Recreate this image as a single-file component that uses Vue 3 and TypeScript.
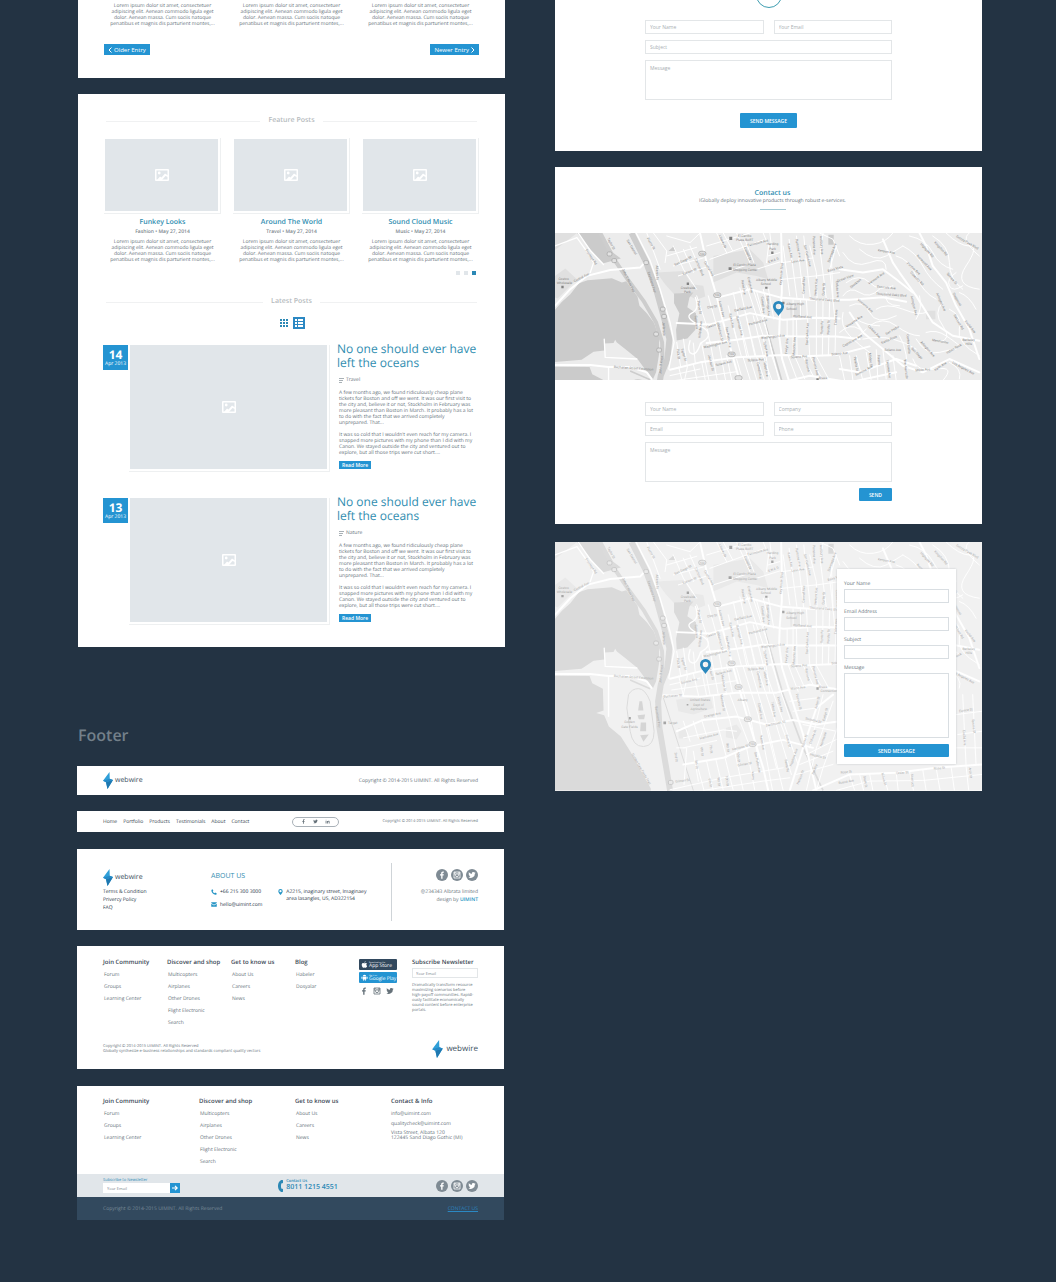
<script setup lang="ts">
import { h, type FunctionalComponent } from 'vue'

interface Post {
  title: string
  meta: string
}
interface Entry {
  day: string
  month: string
  tag: string
}
interface LinkGroup {
  title: string
  links: string[]
}
type Label = [number, number, number, string]

const excerpt = [
  'Lorem ipsum dolor sit amet, consectetuer',
  'adipiscing elit. Aenean commodo ligula eget',
  'dolor. Aenean massa. Cum sociis natoque',
  'penatibus et magnis dis parturient montes,...',
].join('\n')

const features: Post[] = [
  { title: 'Funkey Looks', meta: 'Fashion • May 27, 2014' },
  { title: 'Around The World', meta: 'Travel • May 27, 2014' },
  { title: 'Sound Cloud Music', meta: 'Music • May 27, 2014' },
]

const entries: Entry[] = [
  { day: '14', month: 'Apr 2013', tag: 'Travel' },
  { day: '13', month: 'Apr 2013', tag: 'Nature' },
]

const story = [
  'A few months ago, we found ridiculously cheap plane',
  'tickets for Boston and off we went. It was our first visit to',
  'the city and, believe it or not, Stockholm in February was',
  'more pleasant than Boston in March. It probably has a lot',
  'to do with the fact that we arrived completely',
  'unprepared. That...',
  '',
  "It was so cold that I wouldn't even reach for my camera. I",
  'snapped more pictures with my phone than I did with my',
  'Canon. We stayed outside the city and ventured out to',
  'explore, but all those trips were cut short....',
].join('\n')

const nav = ['Home', 'Portfolio', 'Products', 'Testimonials', 'About', 'Contact']
const legal = ['Terms & Condition', 'Privercy Policy', 'FAQ']

const groups: LinkGroup[] = [
  { title: 'Join Community', links: ['Forum', 'Groups', 'Learning Center'] },
  { title: 'Discover and shop', links: ['Multicopters', 'Airplanes', 'Other Drones', 'Flight Electronic', 'Search'] },
  { title: 'Get to know us', links: ['About Us', 'Careers', 'News'] },
]
const blog: LinkGroup = { title: 'Blog', links: ['Habeler', 'Dosyalar'] }

const newsletter = [
  'Dramatically transform resource',
  'maximizing scenarios before',
  'high-payoff communities. Rapidi-',
  'ously facilitate economically',
  'sound content before enterprise',
  'portals.',
].join('\n')

const cardFields = [
  { id: 'card-name', label: 'Your Name' },
  { id: 'card-email', label: 'Email Address' },
  { id: 'card-subject', label: 'Subject' },
]

// Main avenues, drawn wide
const avenues = [
  'M450 21 L470 110 L497 200 L520 290 L545 380 L590 540 L640 700 L655 768',
  'M694 21 L696 110 L696 200 L690 270 L688 330 L697 400 L722 480 L760 600 L800 768',
  'M14 418 L120 418 L175 424 L240 424 L290 440 L305 460',
  'M14 240 L60 190 L110 150 L180 132 L270 125 L288 105',
  'M360 432 L450 410 L560 395 L700 388 L760 392 L860 388 L960 362',
  'M340 482 L450 486 L560 474 L680 474 L780 450 L900 470 L1040 440',
  'M380 292 L480 296 L600 262 L700 282 L800 276 L870 278',
  'M470 352 L560 342 L640 330 L740 332 L860 332 L930 340',
  'M500 216 L600 190 L696 216 L780 222 L900 222 L1000 214 L1070 228',
  'M380 590 L460 556 L560 546 L650 570 L730 556 L800 570 L870 560',
  'M400 690 L520 670 L600 636 L700 616 L790 640',
  'M850 480 L800 520 L760 640 L720 768',
  'M1000 40 L1030 110 L1050 140 L1100 210 L1150 290 L1210 330 L1290 345',
  'M1110 21 L1130 60 L1150 120 L1190 170 L1220 240 L1260 310 L1290 400',
  'M870 130 L940 140 L1000 130 L1040 160 L1090 200',
  'M900 260 L940 320 L1000 370 L1060 420 L1120 440 L1200 400 L1290 440',
  'M870 430 L930 440 L1040 400 L1100 420',
  'M790 768 L900 720 L1040 715 L1160 700 L1298 690',
]

// Side streets, drawn thin
const streets = [
  'M290 21 L330 130', 'M310 21 L350 75 L345 110', 'M350 30 L420 50 L450 21', 'M370 60 L400 130 L440 190',
  'M400 70 L430 140', 'M420 60 L446 120', 'M350 90 L440 64', 'M370 120 L460 96', 'M385 150 L468 124',
  'M470 60 L600 21', 'M480 100 L640 42', 'M490 150 L590 118', 'M500 21 L530 80', 'M520 21 L548 74',
  'M560 21 L600 110', 'M585 40 L612 110', 'M640 21 L656 60 L650 110', 'M620 130 L690 108', 'M655 90 L690 80',
  'M660 21 L666 70', 'M700 60 L720 210', 'M718 40 L742 220', 'M740 30 L762 220', 'M762 30 L782 220',
  'M780 60 L800 140 L802 222', 'M700 110 L790 96', 'M700 160 L800 150', 'M820 21 L812 80 L830 220',
  'M845 90 L850 220', 'M860 60 L840 130 L858 300 L856 390', 'M800 150 L870 140', 'M810 21 L850 40 L870 90',
  'M730 222 L730 390', 'M752 222 L752 280', 'M770 222 L780 390', 'M800 222 L800 390', 'M820 222 L818 390',
  'M840 222 L836 390', 'M712 282 L712 388', 'M740 282 L742 388', 'M550 200 L590 390', 'M570 186 L615 390',
  'M590 180 L640 330 L660 474', 'M610 190 L655 330 L690 474', 'M640 190 L660 270', 'M620 196 L640 270',
  'M656 190 L672 280', 'M535 240 L560 342', 'M550 300 L575 395', 'M570 286 L596 392', 'M590 276 L618 392',
  'M610 270 L640 390', 'M640 270 L668 388', 'M475 210 L500 300 L520 350', 'M440 210 L470 300 L480 352',
  'M455 352 L480 480', 'M480 346 L505 480', 'M505 346 L530 480', 'M530 390 L548 476', 'M430 352 L436 414',
  'M400 340 L412 424 L400 480', 'M380 350 L392 424', 'M360 450 L450 430', 'M365 466 L560 438', 'M386 424 L400 482',
  'M430 416 L446 484', 'M455 408 L470 484', 'M560 400 L600 540 L630 700', 'M580 396 L625 540 L668 768',
  'M600 394 L650 560 L700 768', 'M620 392 L676 560 L725 720', 'M640 390 L700 560 L745 690', 'M665 388 L722 556',
  'M715 390 L745 470', 'M735 392 L765 460', 'M760 392 L790 450', 'M780 392 L812 450', 'M800 392 L838 462',
  'M540 480 L570 560 L600 636', 'M515 480 L540 560 L560 650', 'M490 484 L500 560 L530 670', 'M400 560 L420 620',
  'M430 560 L445 610', 'M455 556 L470 604', 'M400 610 L520 586 L560 590', 'M400 640 L500 618', 'M440 686 L462 768',
  'M470 680 L490 768', 'M498 676 L520 768', 'M525 668 L550 768', 'M555 655 L580 768', 'M590 640 L615 768',
  'M430 650 L445 740', 'M380 640 L410 640 L402 750', 'M360 766 L520 730 L700 700', 'M460 768 L640 740 L720 730',
  'M650 580 L680 700', 'M690 560 L720 640', 'M720 500 L800 490', 'M730 530 L800 520', 'M760 570 L860 590',
  'M770 660 L870 610', 'M750 690 L850 650', 'M740 720 L850 690', 'M820 480 L780 640', 'M850 500 L800 640 L770 768',
  'M870 560 L820 700 L800 768', 'M960 718 L970 768', 'M1000 716 L1015 768', 'M1040 715 L1046 768', 'M900 722 L915 768',
  'M930 720 L942 768', 'M1080 710 L1092 768', 'M1120 706 L1130 768', 'M1160 700 L1172 768', 'M1205 696 L1215 768',
  'M1250 694 L1258 768', 'M860 768 L960 740 L1120 738 L1298 720', 'M1220 540 L1298 530', 'M1225 600 L1298 590',
  'M1240 480 L1250 690', 'M1270 480 L1280 690', 'M1220 640 L1298 640',
  'M900 30 Q930 60 970 55 T1030 21', 'M930 70 Q975 110 1010 90 T1060 60', 'M880 80 Q910 130 960 110 T1010 130',
  'M890 170 Q930 140 960 170 T1030 180', 'M880 210 Q900 180 930 200 T990 190', 'M900 240 Q940 220 960 260 T1040 270',
  'M880 260 Q870 300 900 330 T960 380', 'M870 320 Q900 290 930 310', 'M960 300 Q1000 270 1040 300 T1110 330',
  'M940 340 Q990 330 1030 340 T1100 370', 'M980 250 Q1010 230 1060 250 T1130 260', 'M1060 60 Q1100 80 1120 120 T1180 190',
  'M1040 90 Q1080 100 1100 150 T1160 220', 'M1080 30 Q1130 40 1150 80 T1210 130', 'M1150 30 Q1200 60 1200 110 T1240 190',
  'M1190 21 Q1230 60 1260 60 T1250 120 T1290 190', 'M1220 140 Q1190 160 1200 180 T1240 180', 'M1180 230 Q1150 260 1180 300 T1170 350',
  'M1200 250 Q1240 270 1230 310 T1290 390', 'M1130 320 Q1160 310 1190 330 T1230 360', 'M1100 340 Q1130 390 1170 380 T1220 370',
  'M1050 330 Q1080 380 1070 460', 'M1090 400 Q1100 440 1160 430 T1180 465', 'M1200 410 Q1240 430 1230 460',
  'M1000 370 L1010 460', 'M980 372 L985 465', 'M950 380 L965 465', 'M920 390 L940 465', 'M900 390 L910 465',
  'M870 392 L885 465', 'M1030 390 L1040 465', 'M1260 21 Q1230 40 1290 90', 'M1230 200 Q1260 210 1280 250',
  'M920 280 Q950 300 990 300', 'M900 350 Q930 330 950 310', 'M1010 200 Q1000 240 1050 240', 'M1110 210 Q1120 250 1100 280',
]

const labels: Label[] = [
  [120, 95, 55, 'Frontage Rd'], [180, 55, 62, 'Taylor St'], [242, 65, 60, 'San Gabriel'], [300, 55, 60, 'Pierce St'],
  [318, 140, 88, 'Adams St'], [95, 158, -28, 'Central Ave'], [400, 108, -26, 'San Diego St'], [420, 140, -20, 'Lassen St'],
  [445, 125, 66, 'Carlson Blvd'], [474, 130, 60, 'Central Ave'], [590, 84, 66, 'Cornell St'], [515, 48, 66, 'Liberty St'],
  [625, 54, -14, 'Fairmount Ave'], [672, 106, -22, 'E N A G'], [698, 145, -86, 'Key Route Blvd'], [718, 75, 78, 'Kains Ave'],
  [742, 68, 80, 'Ramona Ave'], [745, 108, -8, 'Lynn Ave'], [770, 90, 76, 'San Carlos Ave'], [790, 58, 88, 'Pomona Ave'],
  [812, 58, 86, 'Ashbury Ave'], [850, 82, -70, 'Stannage Ave'], [858, 132, -16, 'Balra Vista'], [765, 178, -88, 'Carmel Ave'],
  [802, 185, -86, 'Ventura Ave'], [825, 190, -86, 'Curtis St'], [860, 190, 86, 'Colusa Ave'], [888, 160, -20, 'Ocean View'],
  [920, 175, -40, 'Stockton'], [636, 238, 84, 'Cornell Ave'], [652, 240, 86, 'Stannage Ave'], [578, 185, 80, 'Kains Ave'],
  [598, 178, 78, 'Evelyn Ave'], [580, 252, -12, 'Garfield Ave'], [487, 246, -8, 'Clay St'], [512, 250, 76, 'Adams Ave'],
  [445, 245, 80, 'Pierce St'], [436, 290, 84, 'Gateview'], [454, 312, -84, 'Hillside Ave'], [490, 302, -18, 'Castro St'],
  [508, 322, 76, 'Madison St'], [532, 335, 80, 'San Pablo Ave'], [542, 285, 78, 'Kains Ave'], [566, 300, 76, 'Stannage Ave'],
  [625, 292, -14, 'Portland Ave'], [758, 276, 4, 'Portland Ave'], [824, 225, 4, 'Thousand Oaks Blvd'], [670, 336, -6, 'Washington Ave'],
  [497, 360, -14, 'Washington Ave'], [645, 370, 78, 'Talbot Ave'], [714, 362, -86, 'Evelyn Ave'], [736, 362, -86, 'Masonic Ave'],
  [776, 325, -88, 'San Carlos Ave'], [820, 305, -88, 'Santa Fe'], [840, 305, -88, 'Peralta St'], [862, 275, -86, 'Tulare Ave'],
  [618, 406, -4, 'Solano Ave'], [748, 396, -4, 'Solano Ave'], [870, 387, -6, 'Solano Ave'], [1030, 376, 0, 'Solano Ave'],
  [418, 442, -14, 'Solano Ave'], [522, 416, -14, 'Solano Ave'], [382, 385, 84, 'Polk St'], [398, 388, 72, 'Taylor St'],
  [480, 412, 76, 'Jackson St'], [625, 435, 80, 'Cornell Ave'], [645, 430, 80, 'Talbot Ave'], [770, 420, 76, 'Ramona'],
  [794, 422, 76, 'Pomona Ave'], [518, 445, 80, 'Madison St'], [916, 415, 80, 'Peralta St'], [960, 403, 84, 'Modoc St'],
  [985, 403, 84, 'Fresno'], [1066, 430, 84, 'The Alameda'], [1074, 355, 84, 'Contra Costa'], [1014, 430, 82, 'Tacoma Ave'],
  [1120, 436, -4, 'Marin Ave'], [1240, 430, 28, 'Los Angeles Ave'], [984, 455, -4, 'Marina St'], [944, 438, -26, 'Sonoma Ave'],
  [915, 290, -34, 'Vincente Ave'], [910, 348, -30, 'Capistrano Ave'], [972, 320, 46, 'Colusa Ave'], [1030, 316, -30, 'San Pedro'],
  [1020, 345, -24, 'Santa Rosa'], [1010, 188, 6, 'San Luis Ave'], [1025, 210, 4, 'Thousand Oaks Blvd'], [982, 160, -36, 'Vermont Ave'],
  [945, 242, 40, 'Vincente Ave'], [1010, 80, 10, 'Kenyon Ave'], [1130, 75, 48, 'Highgate Rd'], [1122, 112, 46, 'Norwood Ave'],
  [1090, 130, 42, 'Purdue Ave'], [1100, 160, 46, 'Coventry Rd'], [1172, 70, 48, 'Kingston Rd'], [1172, 230, 66, 'Arlington Ave'],
  [1090, 240, 76, 'Arlington Ave'], [1205, 160, 50, 'Spruce St'], [1252, 52, 30, 'Grizzly Peak Blvd'], [1220, 222, 60, 'Cragmont'],
  [1225, 290, 60, 'San Luis Rd'], [1260, 305, 50, 'Euclid Ave'], [1132, 372, 48, 'Arlington Ave'], [1172, 350, 10, 'Mendocino'],
  [1215, 372, -30, 'Indian Rock'], [1100, 385, 46, 'San Diego'], [1175, 425, -34, 'Keith Ave'],
  [232, 165, 64, 'John T. Knox Fwy'], [302, 170, 72, 'Eastshore Fwy'], [336, 418, -84, 'John T Knox'], [338, 310, 86, 'Jefferson'],
  [250, 431, 4, 'Buchanan Street Extension'], [368, 487, -4, 'Buchanan St'], [745, 463, -8, 'Marin Ave'], [790, 560, 14, 'Sonoma St'],
  [678, 570, -12, 'Dartmouth St'], [488, 544, -12, 'Orange Ave'], [478, 608, -14, 'Harrison Ave'], [515, 505, 80, 'Madison St'],
  [585, 692, -10, 'Gilman St'], [572, 642, -14, 'Harrison St'], [620, 684, 78, 'San Pablo Ave'], [320, 548, 80, 'Eastshore Fwy'],
  [375, 668, 84, '2nd St'], [436, 690, 84, '5th St'], [453, 652, 84, '6th St'], [480, 644, 84, '7th St'],
  [530, 640, 84, '8th St'], [503, 742, 84, '9th St'], [478, 746, 80, '6th St'], [562, 668, 84, '10th St'],
  [606, 724, 84, 'Kains'], [528, 740, 84, '10th St'], [398, 742, -8, 'Gilman St'], [326, 762, -8, 'Gilman St'],
  [270, 705, 60, 'Golden Gate Fields Trail'], [628, 530, 80, 'Cornell Ave'], [688, 510, 76, 'Evelyn Ave'], [668, 525, 80, 'Talbot Ave'],
  [634, 625, 80, 'Kains Ave'], [712, 620, 76, 'Curtis St'], [744, 502, 76, 'Pomona St'], [735, 670, -70, 'Hopkins Ave'],
  [708, 694, 80, 'Santa Fe'], [768, 620, -72, 'Albina St'], [806, 505, -76, 'Acton St'], [792, 608, -70, 'Ordway St'],
  [798, 706, -70, 'Peralta'], [755, 730, -68, 'Neilson St'], [804, 668, 14, 'Hopkins St'], [680, 762, -4, 'Page St'],
  [830, 540, -76, 'Evelyn St'], [824, 615, -72, 'Northside'], [890, 716, -6, 'Rose St'], [890, 745, -10, 'Buena Ave'],
  [944, 742, 80, 'Grant St'], [1000, 735, 74, 'Milvia St'], [1024, 755, -6, 'Vine St'], [1058, 718, -4, 'Cedar St'],
  [1085, 738, 86, 'Shattuck'], [1170, 704, -4, 'Rose St'], [1260, 715, 84, 'Arch St'], [1242, 610, 86, 'Euclid Ave'],
  [1270, 575, 84, 'Spruce St'], [1250, 530, -8, 'Eunice St'],
]

const places: Label[] = [
  [668, 58, 0, 'Harding'], [668, 72, 0, 'Park'], [584, 33, 0, 'El Cerrito'], [584, 46, 0, 'Plaza BART'],
  [584, 121, 0, 'El Cerrito Plaza'], [586, 134, 0, 'Shopping Center'], [650, 164, 0, 'Albany Middle'], [648, 177, 0, 'School'],
  [414, 188, 0, 'Creekside'], [412, 201, 0, 'Park'], [736, 239, 0, 'Albany High'], [725, 252, 0, 'School'],
  [40, 162, 0, 'Costco'], [42, 175, 0, 'Wholesale'], [1258, 346, 0, 'Berkeley'], [1258, 359, 0, 'Hills'],
  [450, 500, 0, 'United States'], [446, 513, 0, 'Dept of'], [446, 526, 0, 'Agriculture'], [578, 500, 0, 'Albany'],
  [238, 566, 0, 'Golden'], [238, 579, 0, 'Gate Fields'], [368, 569, 0, 'Target'], [820, 460, 0, 'Brass'],
  [838, 473, 0, 'Connection'],
]

const shields: Array<[number, number]> = [[457, 83], [502, 208], [545, 386], [566, 457], [594, 554], [608, 629]]
const interchanges: Array<[number, number]> = [[192, 104], [288, 110], [338, 250], [318, 325], [327, 373], [362, 744], [178, 84], [342, 272]]

const parks = [
  'M14 21H80L14 72zM320 140L400 135 425 175 460 180 466 212 440 222 400 200 372 205 345 175z',
  'M490 90L600 70 640 110 655 160 620 150 560 140 490 170zM378 495L480 480 490 520 430 540 385 530z',
  'M720 232H755V275H722zM14 150L45 128 80 160 22 218 14 215zM528 580L560 570 575 590 560 615 528 608z',
  'M384 580H412V612H386zM1130 255H1158V280H1130z',
]
const water = [
  'M80 21H150L188 80 212 98 160 112 122 72z',
  'M14 252L35 228 60 205 86 172 112 163 185 157 215 170 228 166 262 212 268 240 290 262 312 292 327 335 327 385 318 440 308 462 262 400 225 370 200 350 195 342 190 352 164 353 162 374 130 378 94 402 14 409z',
  'M14 423L118 424 126 446 158 462 160 528 138 535 162 542 176 576 212 606 240 650 270 705 302 762V768H14z',
  'M372 203L430 200 418 216 412 244 438 262 436 312 412 338 380 344 378 312 388 262 372 232z',
  'M355 75L372 60 375 75zM836 26H852V56H836z',
]
const highways: Array<[number, string]> = [
  [18, 'M244 21L286 104 318 190 340 270 358 340 352 400 332 450 324 500 328 580 345 680 360 768'],
  [12, 'M150 21L192 100 232 160 280 225 318 290 336 350 338 430'],
  [5, 'M240 436L300 462M640 270L660 340 700 480 760 640 820 768'],
  [3, 'M340 490L430 768'],
  [3, 'M235 480Q245 462 265 462T300 500L312 590Q312 635 280 636T240 590L230 520z'],
]
const ramps = [
  'M84 21L122 76 160 116M258 21L300 104 330 190 360 290 372 350 356 430M162 340L165 395 260 400M175 424V545M14 60L80 35 112 80 130 110 120 140',
  'M436 215Q450 250 425 262T450 300 452 352Q440 390 425 384T420 345',
]

// Street map; rows below `depth` map units are left out
const StreetMap: FunctionalComponent<{ depth: number }> = ({ depth }) => {
  const lines = (list: string[], width: number) => list.map((d) => h('path', { d, 'stroke-width': width }))
  const inside = (limit: number) => ([, y]: readonly [number, number, ...unknown[]]) => y < 21 + depth - limit
  const names = (list: Label[], limit: number) =>
    list.filter(inside(limit)).map(([x, y, r, t]) => h('text', { transform: `translate(${x} ${y}) rotate(${r})` }, t))
  return h('svg', { viewBox: `14 21 1284 ${depth}`, role: 'img', 'aria-label': 'Street map' }, [
    h('rect', { x: 14, y: 21, width: 1284, height: 747, fill: '#ececec' }),
    h('g', { fill: '#e0e0e0' }, parks.map((d) => h('path', { d }))),
    h('g', { fill: '#cbcbcb' }, water.map((d) => h('path', { d }))),
    h('g', { fill: 'none', stroke: '#cdcdcd', 'stroke-linejoin': 'round' }, highways.map(([w, d]) => h('path', { d, 'stroke-width': w }))),
    h('path', { fill: '#c4c4c4', d: 'M268 500H276L280 528H264zM262 542L285 540 282 554H266zM272 564H288V590H270zM270 602L296 600 280 622z' }),
    h('g', { fill: 'none', stroke: '#fff', 'stroke-linecap': 'round', 'stroke-linejoin': 'round' }, [
      lines(streets, 3),
      lines(avenues, 6),
      lines(ramps, 4),
    ]),
    h('g', { fill: '#e2e2e2', stroke: '#a2a2a2', 'stroke-width': 2 }, [
      shields.filter(inside(0)).map(([x, y]) => h('rect', { x: x - 11, y: y - 7, width: 22, height: 14, rx: 7 })),
      interchanges.filter(inside(0)).map(([x, y]) => h('rect', { x: x - 7, y: y - 6, width: 14, height: 12, rx: 4 })),
    ]),
    h('g', { fill: '#868686', 'font-family': 'Roboto, sans-serif', 'font-size': 10, 'text-anchor': 'middle' }, [
      names(labels, 22),
      names(places, 0),
    ]),
    h('g', { fill: '#868686', 'font-family': 'Roboto, sans-serif', 'font-size': 8, 'text-anchor': 'middle' },
      shields.filter(inside(8)).map(([x, y]) => h('text', { x, y: y + 3 }, '123'))),
    h('path', { fill: '#808080', d: 'M664 77h7v7h-7zM538 32h9v10h-9zM536 124h9v8h-9zM646 183h7v6h-7zM410 170h7v7h-7zM697 228h7v7h-7zM33 180h7v7h-7zM340 561h8v8h-8zM236 547h6v8h-6zM800 458h7v7h-7zM410 508h5v5h-5z' }),
  ])
}
StreetMap.props = ['depth']
</script>

<template>
  <svg class="sprite" aria-hidden="true">
    <symbol id="i-image" viewBox="0 0 14 12">
      <path fill-rule="evenodd" fill="#fff" d="M1 0h12a1 1 0 0 1 1 1v10a1 1 0 0 1-1 1H1a1 1 0 0 1-1-1V1a1 1 0 0 1 1-1zm.5 1.500v9h11v-9z" />
      <circle cx="4.200" cy="4" r="1.400" fill="#fff" />
      <path fill="#fff" d="M2 11L5 7.500l1.500 1L10 4.500l3 2V8l-2.500-1L7 11z" />
    </symbol>
    <symbol id="i-bolt" viewBox="0 0 20 34">
      <path fill="#2f9fd8" d="M13 0L0 17.500 6 20.500 9 34 20 16 13.500 13.500z" />
      <path fill="#1f78b0" d="M6 20.500L20 16 9 34z" />
      <path fill="#2689c6" d="M0 17.500L13.500 13.500 20 16 6 20.500z" />
    </symbol>
    <symbol id="i-facebook" viewBox="0 0 24 24">
      <path fill="currentColor" d="M9.500 23v-9.500H6V9.400h3.500V7c0-3.700 2-5.800 5.200-5.800 1.200 0 2.300.1 2.800.2v3.800h-2c-1.500 0-1.900.8-1.900 2v2.200h3.900l-.6 4.100h-3.300V23z" />
    </symbol>
    <symbol id="i-twitter" viewBox="0 0 24 24">
      <path fill="currentColor" d="M23 5c-.8.400-1.700.6-2.600.7.900-.6 1.600-1.400 2-2.500-.9.500-1.800.9-2.900 1.100A4.500 4.500 0 0 0 11.800 8.400C8 8.200 4.700 6.400 2.500 3.700c-1.200 2-.6 4.700 1.400 6-.7 0-1.400-.2-2-.6 0 2.100 1.500 4 3.600 4.500-.7.200-1.400.2-2 .1.600 1.800 2.200 3.100 4.200 3.100A9 9 0 0 1 1 18.700 12.800 12.800 0 0 0 20.700 7.300c.9-.6 1.700-1.400 2.300-2.300z" />
    </symbol>
    <symbol id="i-instagram" viewBox="0 0 24 24">
      <path fill="none" stroke="currentColor" stroke-width="2.400" d="M3 3h18v18H3zM3 9h5M16 9h5" />
      <circle cx="12" cy="12.500" r="4.500" fill="none" stroke="currentColor" stroke-width="2.400" />
      <path fill="currentColor" d="M16 4h4v4h-4zM4 3h1.500v5H4zM7 3h1.500v4H7z" />
    </symbol>
    <symbol id="i-linkedin" viewBox="0 0 24 24">
      <path fill="currentColor" d="M3 9h4v12H3zM5 3a2.200 2.200 0 1 1 0 4.400A2.200 2.200 0 0 1 5 3zM9.500 9h3.800v1.700c.6-1 1.900-2 3.800-2 4 0 4.900 2.500 4.900 6V21h-4v-5.700c0-1.500 0-3.200-2-3.200s-2.500 1.500-2.500 3.100V21h-4z" />
    </symbol>
    <symbol id="i-phone" viewBox="0 0 24 24">
      <path fill="currentColor" d="M6 1l3.500 6-2.700 2.600c1.300 3 3.700 5.400 7 7l2.700-2.600L23 17.500c0 3-2.300 5.200-5 5C9 22 1.500 14 1.500 6 1.500 3.400 3.400 1.400 6 1z" />
    </symbol>
    <symbol id="i-mail" viewBox="0 0 24 20">
      <path fill="currentColor" d="M1 1h22v3L12 11 1 4zM1 7l11 7 11-7v12H1z" />
    </symbol>
    <symbol id="i-pin" viewBox="0 0 22 30">
      <path fill="currentColor" fill-rule="evenodd" d="M11 0a11 11 0 0 1 11 11c0 7-7 13-11 19C7 24 0 18 0 11A11 11 0 0 1 11 0zm0 5.500a5.500 5.500 0 1 0 0 11 5.500 5.500 0 0 0 0-11z" />
    </symbol>
    <symbol id="i-handset" viewBox="0 0 10 24">
      <path fill="currentColor" d="M6.500 0H9c.6 0 1 .4 1 1v4.500c0 .6-.4 1-1 1H7c-1.500 3-1.500 8 0 11h2c.6 0 1 .4 1 1V23c0 .6-.4 1-1 1H6.500C-2.200 20-2.200 4 6.500 0z" />
    </symbol>
    <symbol id="i-apple" viewBox="0 0 24 24">
      <path fill="currentColor" d="M16 1c.1 2.500-1.900 4.800-4.400 4.800C11.400 3.500 13.500 1.200 16 1zM21 17c-1.200 3-3 6-5 6-1.400 0-2-.9-3.700-.9S9.900 23 8.500 23C5.500 23 2.500 17.500 2.500 13c0-4 2.500-6.300 5.200-6.300 1.700 0 3 1 4.200 1 1.100 0 2.700-1.200 4.800-1.200 1.600.1 3 .8 3.900 2-3.300 2.200-2.800 6.900.4 8.500z" />
    </symbol>
    <symbol id="i-android" viewBox="0 0 24 24">
      <path fill="currentColor" d="M6 9h12v10h-2v4h-2.500v-4h-3v4H8v-4H6zM6 8a6 5.500 0 0 1 12 0zM1.500 9.500h3v7h-3zM19.500 9.500h3v7h-3z" />
    </symbol>
  </svg>

  <main class="board">
    <div class="column">
      <section class="panel older">
        <div class="thirds">
          <p v-for="n in 3" :key="n" class="copy centered">{{ excerpt }}</p>
        </div>
        <div class="pager">
          <button type="button" class="page-btn">
            <svg width="4" height="6" viewBox="0 0 4 6"><path d="M3.500 0.500L1 3l2.500 2.500" fill="none" stroke="#fff" /></svg>
            Older Entry
          </button>
          <button type="button" class="page-btn">
            Newer Entry
            <svg width="4" height="6" viewBox="0 0 4 6"><path d="M0.500 0.500L3 3 0.500 5.500" fill="none" stroke="#fff" /></svg>
          </button>
        </div>
      </section>

      <section class="panel blog">
        <h2 class="ruled">Feature Posts</h2>
        <div class="thirds">
          <article v-for="post in features" :key="post.title" class="feature">
            <div class="frame"><div class="thumb"><svg width="14" height="12"><use href="#i-image" /></svg></div></div>
            <h3>{{ post.title }}</h3>
            <p class="meta">{{ post.meta }}</p>
            <p class="copy centered">{{ excerpt }}</p>
          </article>
        </div>
        <div class="dots"><i></i><i></i><i class="on"></i></div>

        <h2 class="ruled latest">Latest Posts</h2>
        <div class="views">
          <button type="button" aria-label="Grid view">
            <svg width="8" height="8" viewBox="0 0 8 8" fill="#2b88b5"><path d="M0 0h2v2H0zM3 0h2v2H3zM6 0h2v2H6zM0 3h2v2H0zM3 3h2v2H3zM6 3h2v2H6zM0 6h2v2H0zM3 6h2v2H3zM6 6h2v2H6z" /></svg>
          </button>
          <button type="button" class="on" aria-label="List view">
            <svg width="8" height="8" viewBox="0 0 8 8" fill="#fff"><path d="M0 0h2v2H0zM3 0h5v2H3zM0 3h2v2H0zM3 3h5v2H3zM0 6h2v2H0zM3 6h5v2H3z" /></svg>
          </button>
        </div>

        <article v-for="entry in entries" :key="entry.day" class="entry">
          <div class="date"><strong>{{ entry.day }}</strong><span>{{ entry.month }}</span></div>
          <div class="frame"><div class="thumb"><svg width="14" height="12"><use href="#i-image" /></svg></div></div>
          <div class="entry-text">
            <h3>No one should ever have<br />left the oceans</h3>
            <p class="tag">
              <svg width="5" height="5" viewBox="0 0 5 5"><path d="M0 .5h5M0 2.500h4M0 4.500h3" stroke="#a9b1b6" /></svg>{{ entry.tag }}
            </p>
            <p class="copy">{{ story }}</p>
            <button type="button" class="more">Read More</button>
          </div>
        </article>
      </section>

      <h1>Footer</h1>

      <footer class="panel slim">
        <a href="#" class="logo"><svg width="10" height="17"><use href="#i-bolt" /></svg>webwire</a>
        <span>Copyright © 2014-2015 UIMINT. All Rights Reserved</span>
      </footer>

      <footer class="panel bar">
        <nav><a v-for="item in nav" :key="item" href="#">{{ item }}</a></nav>
        <div class="pill">
          <a href="#" aria-label="Facebook"><svg width="5" height="5"><use href="#i-facebook" /></svg></a>
          <a href="#" aria-label="Twitter"><svg width="5" height="5"><use href="#i-twitter" /></svg></a>
          <a href="#" aria-label="LinkedIn"><svg width="5" height="5"><use href="#i-linkedin" /></svg></a>
        </div>
        <span class="tiny">Copyright © 2014-2015 UIMINT. All Rights Reserved</span>
      </footer>

      <footer class="panel about">
        <div class="brand">
          <a href="#" class="logo"><svg width="10" height="17"><use href="#i-bolt" /></svg>webwire</a>
          <a v-for="item in legal" :key="item" href="#">{{ item }}</a>
        </div>
        <div class="contact">
          <h3>ABOUT US</h3>
          <div class="contact-rows">
            <div>
              <p><svg width="6" height="6"><use href="#i-phone" /></svg>+66 215 300 3000</p>
              <p><svg width="6" height="5"><use href="#i-mail" /></svg>hello@uimint.com</p>
            </div>
            <p><svg width="5" height="6"><use href="#i-pin" /></svg><span>A2215, inaginary street, Imaginaey<br />area lasangles, US, AD322154</span></p>
          </div>
        </div>
        <div class="credit">
          <div class="rounds">
            <a href="#" aria-label="Facebook"><svg width="8" height="8"><use href="#i-facebook" /></svg></a>
            <a href="#" aria-label="Instagram"><svg width="8" height="8"><use href="#i-instagram" /></svg></a>
            <a href="#" aria-label="Twitter"><svg width="8" height="8"><use href="#i-twitter" /></svg></a>
          </div>
          <p>@234343 Albrata limited</p>
          <p>design by <a href="#">UIMINT</a></p>
        </div>
      </footer>

      <footer class="panel wide">
        <div class="wide-grid">
          <div v-for="group in [...groups, blog]" :key="group.title" class="links">
            <h3>{{ group.title }}</h3>
            <a v-for="link in group.links" :key="link" href="#">{{ link }}</a>
          </div>
          <div class="stores">
            <a href="#" class="store dark"><svg width="7" height="7"><use href="#i-apple" /></svg><span><small>Download on the</small>App Store</span></a>
            <a href="#" class="store"><svg width="7" height="7"><use href="#i-android" /></svg><span><small>Get it on</small>Google Play</span></a>
            <div class="plain-social">
              <a href="#" aria-label="Facebook"><svg width="8" height="8"><use href="#i-facebook" /></svg></a>
              <a href="#" aria-label="Instagram"><svg width="8" height="8"><use href="#i-instagram" /></svg></a>
              <a href="#" aria-label="Twitter"><svg width="8" height="8"><use href="#i-twitter" /></svg></a>
            </div>
          </div>
          <div class="signup">
            <h3>Subscribe Newsletter</h3>
            <input type="email" placeholder="Your Email" aria-label="Your Email" />
            <p>{{ newsletter }}</p>
          </div>
        </div>
        <div class="wide-foot">
          <p>Copyright © 2014-2015 UIMINT. All Rights Reserved<br />Globally synthesize e-business relationships and standards compliant quality vectors</p>
          <a href="#" class="logo large"><svg width="11" height="18"><use href="#i-bolt" /></svg>webwire</a>
        </div>
      </footer>

      <footer class="panel stacked">
        <div class="quarters">
          <div v-for="group in groups" :key="group.title" class="links">
            <h3>{{ group.title }}</h3>
            <a v-for="link in group.links" :key="link" href="#">{{ link }}</a>
          </div>
          <address>
            <h3>Contact &amp; Info</h3>
            <a href="#">info@uimint.com</a>
            <a href="#">qualitycheck@uimint.com</a>
            <p>Vista Street, Albata 120<br />122445 Sand Diago Gothic (MI)</p>
          </address>
        </div>
        <div class="band">
          <form class="mini" @submit.prevent>
            <label for="band-email">Subscribe to Newsletter</label>
            <div>
              <input id="band-email" type="email" placeholder="Your Email" />
              <button type="submit" aria-label="Subscribe">
                <svg width="6" height="6" viewBox="0 0 6 6"><path d="M0 3h5M3 .8L5.200 3 3 5.200" fill="none" stroke="#fff" stroke-width="1.200" /></svg>
              </button>
            </div>
          </form>
          <div class="call">
            <svg width="5" height="12"><use href="#i-handset" /></svg>
            <p><small>Contact Us</small>8011 1215 4551</p>
          </div>
          <div class="rounds">
            <a href="#" aria-label="Facebook"><svg width="8" height="8"><use href="#i-facebook" /></svg></a>
            <a href="#" aria-label="Instagram"><svg width="8" height="8"><use href="#i-instagram" /></svg></a>
            <a href="#" aria-label="Twitter"><svg width="8" height="8"><use href="#i-twitter" /></svg></a>
          </div>
        </div>
        <div class="base">
          <span>Copyright © 2014-2015 UIMINT. All Rights Reserved</span>
          <a href="#">CONTACT US</a>
        </div>
      </footer>
    </div>

    <div class="column">
      <section class="panel message">
        <div class="ring"></div>
        <form class="form" @submit.prevent>
          <input type="text" placeholder="Your Name" aria-label="Your Name" />
          <input type="email" placeholder="Your Email" aria-label="Your Email" />
          <input type="text" class="full" placeholder="Subject" aria-label="Subject" />
          <textarea class="full" placeholder="Message" aria-label="Message"></textarea>
          <button type="submit" class="send full">SEND MESSAGE</button>
        </form>
      </section>

      <section class="panel contact-us">
        <header>
          <h2>Contact us</h2>
          <p>IGlobally deploy innovative products through robust e-services.</p>
        </header>
        <div class="map">
          <StreetMap class="streets" :depth="443" />
          <svg class="pin first" width="11" height="15"><use href="#i-pin" /></svg>
        </div>
        <form class="form" @submit.prevent>
          <input type="text" placeholder="Your Name" aria-label="Your Name" />
          <input type="text" placeholder="Company" aria-label="Company" />
          <input type="email" placeholder="Email" aria-label="Email" />
          <input type="tel" placeholder="Phone" aria-label="Phone" />
          <textarea class="full" placeholder="Message" aria-label="Message"></textarea>
          <button type="submit" class="send right full">SEND</button>
        </form>
      </section>

      <section class="panel map tall">
        <StreetMap class="streets faded" :depth="748" />
        <svg class="pin second" width="11" height="15"><use href="#i-pin" /></svg>
        <form class="card" @submit.prevent>
          <template v-for="field in cardFields" :key="field.id">
            <label :for="field.id">{{ field.label }}</label>
            <input :id="field.id" type="text" />
          </template>
          <label for="card-message">Message</label>
          <textarea id="card-message"></textarea>
          <button type="submit" class="send">SEND MESSAGE</button>
        </form>
      </section>
    </div>
  </main>
</template>

<style>
body {
  background: #233343;
}
</style>

<style scoped>
* {
  box-sizing: border-box;
  margin: 0;
  padding: 0;
}
.sprite {
  position: absolute;
  width: 0;
  height: 0;
}
.board {
  display: grid;
  grid-template-columns: minmax(0, 1fr) minmax(0, 1fr);
  align-items: start;
  gap: 50px;
  padding: 0 74px 62px 78px;
  font: 5px/6px "Open Sans", sans-serif;
  color: #66727a;
  text-rendering: geometricPrecision;
}
svg {
  display: block;
  flex: none;
}
a {
  color: inherit;
  text-decoration: none;
}
button,
input,
textarea {
  font: inherit;
  color: #66727a;
  border: 0;
  border-radius: 0;
  outline: 0;
}
input,
textarea {
  display: block;
  width: 100%;
  min-width: 0;
  height: 14px;
  padding: 0 4px;
  background: #fff;
  border: 1px solid #e3e6e8;
}
textarea {
  height: 40px;
  padding: 4px;
  resize: none;
}
::placeholder {
  color: #a9afb3;
  opacity: 1;
}
button {
  color: #fff;
  background: #2494d2;
  cursor: pointer;
}
.panel {
  background: #fff;
}
.thirds {
  display: grid;
  grid-template-columns: repeat(3, minmax(0, 1fr));
  gap: 12px;
}
.copy {
  white-space: pre;
}
.centered {
  display: flex;
  justify-content: center;
  text-align: center;
}

/* Pager panel */
.older {
  padding: 3px 26px 23px;
}
.pager {
  display: flex;
  justify-content: space-between;
  margin-top: 17px;
}
.page-btn {
  display: flex;
  align-items: center;
  gap: 2px;
  height: 11px;
  padding: 0 4px;
  font-size: 6px;
}

/* Posts panel */
.blog {
  margin-top: 16px;
  padding: 21px 26px 22px;
}
.ruled {
  display: flex;
  align-items: center;
  gap: 8px;
  padding: 0 2px;
  font-size: 7px;
  line-height: 12px;
  font-weight: 600;
  color: #b6bbbe;
}
.ruled::before,
.ruled::after {
  content: "";
  flex: 1;
  height: 1px;
  background: #f0f1f2;
}
.blog .thirds {
  margin-top: 11px;
}
.frame {
  padding: 1px 2px 2px 1px;
  border: solid #eef0f1;
  border-width: 0 1px 1px 0;
}
.thumb {
  display: flex;
  align-items: center;
  justify-content: center;
  height: 72px;
  background: #e1e6ea;
}
.feature {
  text-align: center;
}
.feature h3 {
  margin-top: 3px;
  font-size: 7px;
  line-height: 12px;
  font-weight: 600;
  color: #2f8db0;
}
.meta {
  margin-bottom: 4px;
  font-weight: 600;
  color: #7b868d;
}
.dots {
  display: flex;
  justify-content: flex-end;
  gap: 4px;
  margin: 8px 3px 0 0;
}
.dots i {
  width: 4px;
  height: 4px;
  background: #e1e6ea;
}
.dots .on {
  background: #2b88b5;
}
.latest {
  margin-top: 21px;
}
.views {
  display: flex;
  justify-content: center;
  gap: 3px;
  margin: 9px 0 16px;
}
.views button {
  width: 12px;
  height: 12px;
  padding: 2px;
  background: none;
}
.views .on {
  background: #2b88c3;
}
.entry {
  display: grid;
  grid-template-columns: 25px minmax(0, 202fr) minmax(0, 149fr);
  height: 127px;
  margin-left: -1px;
}
.entry + .entry {
  margin-top: 26px;
}
.date {
  height: 25px;
  padding-top: 3px;
  color: #fff;
  background: #2494d2;
  text-align: center;
}
.date strong {
  display: block;
  font-size: 12px;
  line-height: 13px;
}
.entry .frame {
  margin-left: 1px;
  padding-top: 0;
}
.entry .thumb {
  height: 124px;
}
.entry-text {
  padding-left: 9px;
}
.entry h3 {
  margin: -3px 0 7px -2px;
  font-size: 12px;
  line-height: 14px;
  font-weight: 400;
  white-space: nowrap;
  color: #2f8db0;
}
.tag {
  display: flex;
  align-items: center;
  gap: 2px;
  margin-bottom: 7px;
}
.more {
  display: block;
  height: 8px;
  margin-top: 5px;
  padding: 0 3px;
  font-weight: 600;
}

/* Footers */
h1 {
  margin-top: 76px;
  font-size: 16px;
  line-height: 24px;
  font-weight: 600;
  color: #73808a;
}
footer {
  margin-right: 1px;
  margin-left: -1px;
}
.slim,
.bar {
  display: flex;
  align-items: center;
  justify-content: space-between;
  padding: 0 26px;
}
.slim {
  height: 29px;
  margin-top: 19px;
}
.logo {
  display: flex;
  align-items: center;
  gap: 2px;
  font-size: 7px;
  line-height: 8px;
  color: #3b5060;
}
.large {
  gap: 3px;
  font-size: 8px;
}
.bar {
  height: 21px;
  margin-top: 16px;
}
.bar nav {
  display: flex;
  gap: 6px;
  color: #36434f;
}
.pill {
  display: flex;
  align-items: center;
  gap: 7px;
  height: 10px;
  padding: 0 8px;
  border: 1px solid #a9b1b8;
  border-radius: 5px;
}
.tiny {
  font-size: 4px;
}
.about {
  display: grid;
  grid-template-columns: 108fr 180fr 87fr;
  margin-top: 17px;
  padding: 14px 26px 9px;
}
.brand,
.contact {
  padding-top: 6px;
  color: #25323f;
}
.brand > a:not(.logo) {
  display: block;
  line-height: 8px;
}
.brand .logo {
  margin-bottom: 2px;
}
.about h3 {
  padding-top: 3px;
  font-size: 7px;
  line-height: 10px;
  font-weight: 400;
  color: #2f8db0;
}
.contact-rows {
  display: flex;
  gap: 16px;
  margin-top: 7px;
}
.contact p {
  display: flex;
  gap: 3px;
  line-height: 7px;
  white-space: nowrap;
}
.contact p + p {
  margin-top: 6px;
}
.contact svg {
  color: #2494c4;
}
.credit {
  display: flex;
  flex-direction: column;
  align-items: flex-end;
  height: 58px;
  padding-top: 6px;
  border-left: 1px solid #cfd4d8;
  line-height: 8px;
}
.credit .rounds {
  margin-bottom: 7px;
}
.credit p a {
  font-weight: 600;
  color: #2494c4;
}
.rounds {
  display: flex;
  gap: 3px;
}
.rounds a {
  display: flex;
  align-items: center;
  justify-content: center;
  width: 12px;
  height: 12px;
  color: #fff;
  background: #7f8b94;
  border-radius: 50%;
}
.wide {
  margin-top: 16px;
  padding: 12px 26px 10px;
}
.wide-grid {
  display: grid;
  grid-template-columns: repeat(4, minmax(0, 64fr)) minmax(0, 53fr) minmax(0, 66fr);
  height: 81px;
}
.wide h3,
.quarters h3 {
  font-size: 6px;
  line-height: 8px;
  font-weight: 600;
  white-space: nowrap;
  color: #3b4855;
}
.links a {
  display: block;
  padding-left: 1px;
  line-height: 12px;
}
.links h3 {
  margin-bottom: 3px;
}
.stores {
  display: grid;
  grid-template-columns: minmax(0, 1fr);
  align-content: start;
  gap: 2px;
  width: 38px;
  padding-top: 1px;
}
.store {
  display: flex;
  align-items: center;
  gap: 1px;
  height: 11px;
  padding: 0 2px;
  font-size: 5px;
  line-height: 5px;
  white-space: nowrap;
  color: #fff;
  background: #2494d2;
  border-radius: 1px;
}
.store.dark {
  background: #32495e;
}
.store small {
  display: block;
  font-size: 2px;
  line-height: 3px;
}
.plain-social {
  display: flex;
  justify-content: space-between;
  padding: 2px 3px 0 1px;
}
.signup input {
  height: 10px;
  margin: 2px 0 5px;
  padding: 0 3px;
  font-size: 4px;
}
.signup p {
  font-size: 4px;
  line-height: 5px;
  white-space: pre;
}
.signup input::placeholder,
.mini input::placeholder {
  color: #7b868d;
}
.wide-foot {
  display: flex;
  align-items: center;
  justify-content: space-between;
  height: 20px;
}
.wide-foot p {
  font-size: 4px;
  line-height: 5px;
}
.stacked {
  margin-top: 17px;
}
.quarters {
  display: grid;
  grid-template-columns: 96fr 96fr 96fr 87fr;
  height: 88px;
  padding: 11px 26px 0;
}
address {
  font-style: normal;
  white-space: nowrap;
}
address a {
  display: block;
  margin-bottom: 4px;
}
address h3 {
  margin-bottom: 6px;
}
address p {
  line-height: 5px;
}
.band,
.base {
  display: flex;
  align-items: center;
  justify-content: space-between;
  height: 23px;
  padding: 0 26px;
}
.band {
  background: #e1e6ea;
}
.mini {
  width: 77px;
  font-size: 4px;
  line-height: 5px;
}
.mini label {
  color: #2b88b5;
}
.mini div {
  display: flex;
}
.mini input {
  height: 10px;
  border: 0;
}
.mini button {
  display: flex;
  flex: none;
  align-items: center;
  justify-content: center;
  width: 10px;
  height: 10px;
}
.call {
  display: flex;
  align-items: center;
  gap: 3px;
  color: #2b88b5;
}
.call p {
  font-size: 7px;
  line-height: 8px;
  font-weight: 600;
}
.call small {
  display: block;
  font-size: 4px;
  line-height: 4px;
}
.base {
  color: #7b8b99;
  background: #32495e;
}
.base a {
  color: #2b88c3;
  text-decoration: underline;
}

/* Contact forms */
.message {
  padding-bottom: 23px;
  overflow: hidden;
}
.ring {
  width: 26px;
  height: 26px;
  margin: -18px auto 12px;
  border: 1px solid #3d9db0;
  border-radius: 50%;
}
.form {
  display: grid;
  grid-template-columns: minmax(0, 1fr) minmax(0, 1fr);
  gap: 6px 10px;
  padding: 0 90px;
}
.full {
  grid-column: 1 / -1;
}
.send {
  justify-self: center;
  height: 15px;
  padding: 0 10px;
  font-weight: 600;
  border-radius: 1px;
}
.message .send {
  margin-top: 7px;
}
.form .right {
  justify-self: end;
  height: 13px;
}
.contact-us {
  margin-top: 16px;
  padding-bottom: 23px;
}
header {
  height: 66px;
  padding: 23px 0 0 8px;
  text-align: center;
}
header h2 {
  font-size: 7px;
  line-height: 8px;
  font-weight: 600;
  color: #2f8db0;
}
header::after {
  content: "";
  display: block;
  width: 26px;
  height: 1px;
  margin: 5px auto 0;
  background: #a5cbd6;
}
.map {
  position: relative;
}
.streets {
  width: 100%;
}
.faded {
  opacity: 0.7;
}
.pin {
  position: absolute;
  color: #2b88bd;
}
.first {
  left: 51%;
  top: 46%;
}
.second {
  left: 34%;
  top: 47%;
}
.contact-us .form {
  margin-top: 22px;
}
.tall {
  margin-top: 18px;
}
.card {
  position: absolute;
  top: 27px;
  right: 26px;
  width: 119px;
  padding: 12px 7px 7px;
  background: #fff;
  box-shadow: 0 0 2px #c4c8cb;
}
.card label {
  display: block;
  margin-bottom: 2px;
}
.card input {
  margin-bottom: 6px;
  border-color: #d9dee2;
}
.card textarea {
  height: 65px;
  margin-bottom: 6px;
  border-color: #d9dee2;
}
.card .send {
  display: block;
  width: 100%;
  height: 13px;
}
</style>
